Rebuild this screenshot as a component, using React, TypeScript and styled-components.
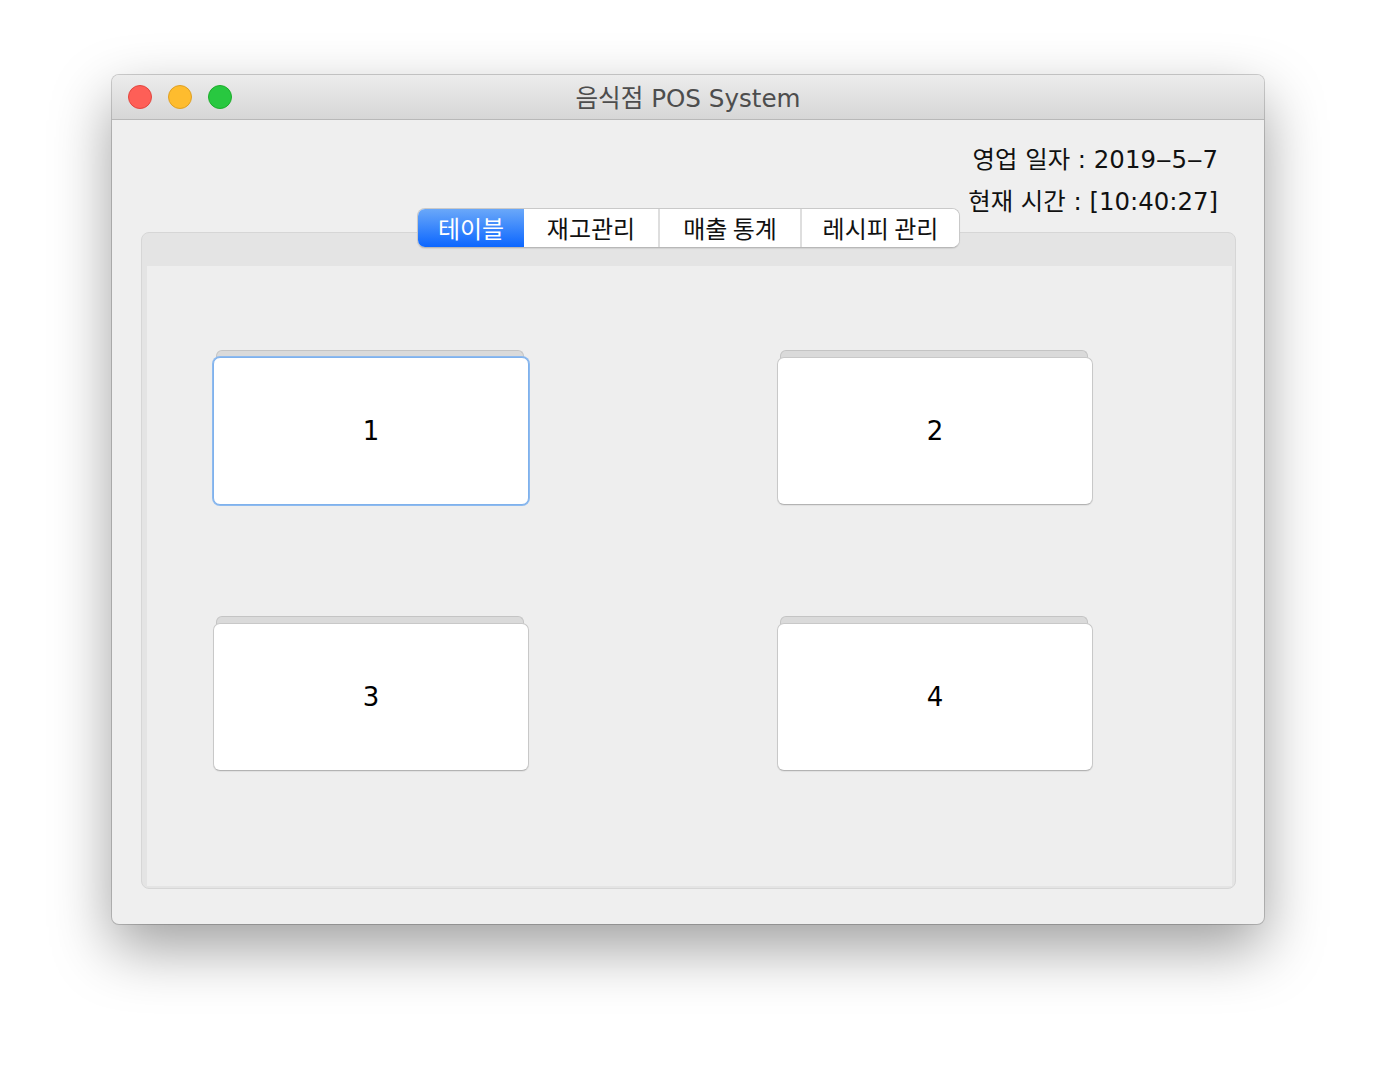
import React, { useState } from 'react';
import styled, { createGlobalStyle } from 'styled-components';

const GlobalStyle = createGlobalStyle`
    html, body {
        margin: 0;
        padding: 0;
        background: #ffffff;
    }
    body {
        width: 1376px;
        height: 1072px;
        overflow: hidden;
        font-family: "DejaVu Sans", "Noto Sans CJK KR", sans-serif;
    }
`;

const Window = styled.div`
    width: 1152px;
    height: 849px;
    margin: 75px auto 0;
    border-radius: 7px;
    background: #efefef;
    box-shadow: 0 0 0 1px rgba(0, 0, 0, 0.18), 0 24px 60px rgba(0, 0, 0, 0.38);
    display: flex;
    flex-direction: column;
    overflow: hidden;
`;

const TitleBar = styled.div`
    height: 44px;
    flex-shrink: 0;
    display: grid;
    grid-template-columns: 1fr auto 1fr;
    align-items: center;
    padding: 0 16px;
    background: linear-gradient(#ececec, #d6d6d6);
    border-bottom: 1px solid #b8b8b8;
`;

const Lights = styled.div`
    display: flex;
    gap: 16px;
`;

const Light = styled.span<{ $fill: string; $edge: string }>`
    width: 24px;
    height: 24px;
    border-radius: 50%;
    box-sizing: border-box;
    background: ${p => p.$fill};
    border: 1px solid ${p => p.$edge};
`;

const Title = styled.div`
    font-size: 24.6px;
    line-height: 30px;
    padding-top: 3px;
    color: #4d4d4d;
`;

const Body = styled.div`
    flex: 1;
    display: flex;
    flex-direction: column;
    padding: 19px 28px 0 29px;
`;

const Info = styled.div`
    align-self: flex-end;
    margin-right: 18px;
    display: flex;
    flex-direction: column;
    align-items: flex-end;
`;

const InfoLine = styled.div`
    font-size: 24.4px;
    line-height: 42px;
    color: #111111;
    white-space: nowrap;
`;

const TabBar = styled.div`
    align-self: center;
    position: relative;
    z-index: 1;
    margin-top: -15px;
    margin-bottom: -16px;
    display: flex;
    height: 40px;
    box-sizing: border-box;
    border: 1px solid #c9c9c9;
    border-bottom-color: #b8b8b8;
    border-radius: 8px;
    background: #ffffff;
    overflow: hidden;
    box-shadow: 0 1px 1px rgba(0, 0, 0, 0.08);
`;

const Tab = styled.button<{ $active: boolean; $w: number }>`
    width: ${p => p.$w}px;
    border: none;
    border-left: ${p => (p.$active ? 'none' : '2px solid #dedede')};
    margin: 0;
    padding: 0 0 2px;
    font-family: "Noto Sans CJK KR", sans-serif;
    font-size: 24px;
    color: ${p => (p.$active ? '#ffffff' : '#111111')};
    background: ${p => (p.$active ? 'linear-gradient(#6aa8f9, #0b66ff)' : '#ffffff')};
    cursor: pointer;
    &:first-child,
    &:nth-child(2) {
        border-left: none;
    }
`;

const Pane = styled.div`
    height: 657px;
    box-sizing: border-box;
    border: 1px solid #d6d6d6;
    border-radius: 8px;
    background: #e4e4e4;
    padding: 33px 3px 2px 5px;
`;

const Content = styled.div`
    height: 100%;
    background: #eeeeee;
    box-sizing: border-box;
    padding: 84px 0 0 66px;
    display: grid;
    grid-template-columns: 316px 316px;
    grid-auto-rows: 155px;
    column-gap: 248px;
    row-gap: 111px;
`;

const Card = styled.div`
    display: flex;
    flex-direction: column;
`;

const Ledge = styled.div`
    height: 8px;
    margin: 0 5px 0 3px;
    box-sizing: border-box;
    background: #dadada;
    border: 1px solid #c4c4c4;
    border-bottom: none;
    border-radius: 6px 6px 0 0;
`;

const Face = styled.button<{ $focused: boolean }>`
    height: 148px;
    margin-top: -1px;
    box-sizing: border-box;
    background: #ffffff;
    border-radius: 7px;
    border: 1px solid ${p => (p.$focused ? '#7fb1ec' : '#c8c8c8')};
    border-bottom-color: ${p => (p.$focused ? '#7fb1ec' : '#b3b3b3')};
    box-shadow: ${p => (p.$focused ? '0 0 0 1px #8dbaef' : '0 1px 1px rgba(0,0,0,0.06)')};
    font-family: "DejaVu Sans", sans-serif;
    font-size: 26px;
    color: #000000;
    cursor: pointer;
    outline: none;
`;

const tabs = [
    { label: '테이블', w: 106 },
    { label: '재고관리', w: 134 },
    { label: '매출 통계', w: 142 },
    { label: '레시피 관리', w: 159 },
];

const tables = [1, 2, 3, 4];

const App: React.FC = () => {
    const [activeTab, setActiveTab] = useState<number>(0);
    const [focused, setFocused] = useState<number>(1);

    return (
        <>
            <GlobalStyle />
            <Window>
                <TitleBar>
                    <Lights>
                        <Light $fill="#fe5f57" $edge="#e2463f" />
                        <Light $fill="#febc2e" $edge="#dfa023" />
                        <Light $fill="#28c840" $edge="#1dad2b" />
                    </Lights>
                    <Title>음식점 POS System</Title>
                    <div />
                </TitleBar>
                <Body>
                    <Info>
                        <InfoLine>영업 일자 : 2019‒5‒7</InfoLine>
                        <InfoLine>현재 시간 : [10:40:27]</InfoLine>
                    </Info>
                    <TabBar>
                        {tabs.map((t, i) => (
                            <Tab
                                key={t.label}
                                $active={activeTab === i}
                                $w={t.w}
                                onClick={() => setActiveTab(i)}
                            >
                                {t.label}
                            </Tab>
                        ))}
                    </TabBar>
                    <Pane>
                        <Content>
                            {tables.map(n => (
                                <Card key={n}>
                                    <Ledge />
                                    <Face $focused={focused === n} onClick={() => setFocused(n)}>
                                        {n}
                                    </Face>
                                </Card>
                            ))}
                        </Content>
                    </Pane>
                </Body>
            </Window>
        </>
    );
};

export default App;
